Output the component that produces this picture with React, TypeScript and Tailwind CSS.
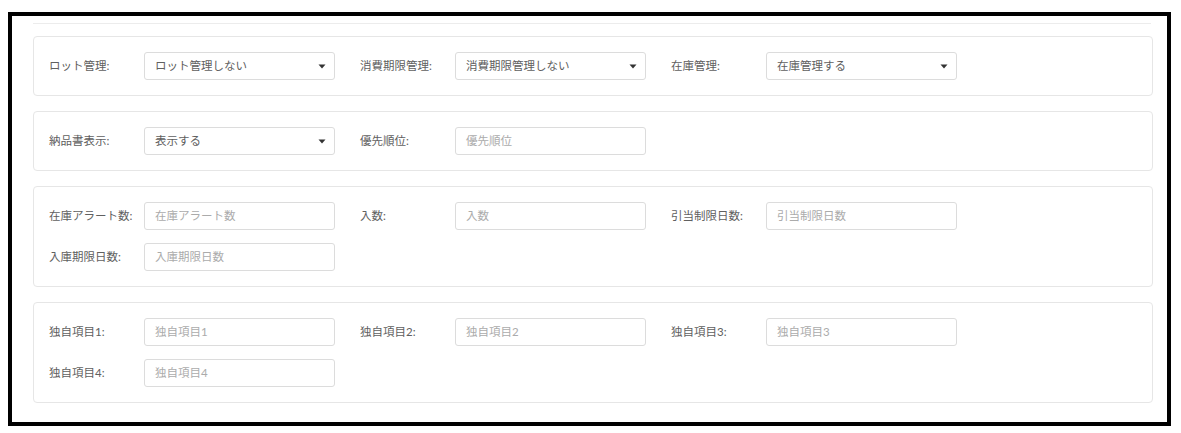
const font = { fontFamily: 'Lato, "Noto Sans CJK JP", sans-serif' };

type Field = { label: string; kind: 'select' | 'input'; value: string };

const cards: Field[][][] = [
  [
    [
      { label: 'ロット管理:', kind: 'select', value: 'ロット管理しない' },
      { label: '消費期限管理:', kind: 'select', value: '消費期限管理しない' },
      { label: '在庫管理:', kind: 'select', value: '在庫管理する' },
    ],
  ],
  [
    [
      { label: '納品書表示:', kind: 'select', value: '表示する' },
      { label: '優先順位:', kind: 'input', value: '優先順位' },
    ],
  ],
  [
    [
      { label: '在庫アラート数:', kind: 'input', value: '在庫アラート数' },
      { label: '入数:', kind: 'input', value: '入数' },
      { label: '引当制限日数:', kind: 'input', value: '引当制限日数' },
    ],
    [{ label: '入庫期限日数:', kind: 'input', value: '入庫期限日数' }],
  ],
  [
    [
      { label: '独自項目1:', kind: 'input', value: '独自項目1' },
      { label: '独自項目2:', kind: 'input', value: '独自項目2' },
      { label: '独自項目3:', kind: 'input', value: '独自項目3' },
    ],
    [{ label: '独自項目4:', kind: 'input', value: '独自項目4' }],
  ],
];

const FieldBox = ({ field }: { field: Field }) => (
  <div className="flex items-center w-[311px]">
    <span className="w-[95px] text-[11.5px] text-[#606060]">{field.label}</span>
    {field.kind === 'select' ? (
      <div className="flex items-center justify-between w-[191px] h-[28px] pl-[10px] pr-[8px] border border-[#dcdcdc] rounded-[3px] bg-white text-[11.5px] text-[#606060]">
        <span>{field.value}</span>
        <svg width="8" height="5" viewBox="0 0 8 5">
          <path d="M0.5 0.5 L7.5 0.5 L4 4.5 Z" fill="#333" />
        </svg>
      </div>
    ) : (
      <div className="flex items-center w-[191px] h-[28px] pl-[10px] border border-[#dcdcdc] rounded-[3px] bg-white text-[11.5px] text-[#ababab]">
        {field.value}
      </div>
    )}
  </div>
);

export default function App() {
  return (
    <div className="bg-white w-[1181px] h-[433px] pt-[12px] pl-[8px]" style={font}>
      <div className="w-[1163px] h-[414px] border-4 border-black pl-[21px] pr-[14px]">
        <div className="mt-[7px] h-px bg-[#ececec] mr-[2px]" />
        <div className="mt-[12px] flex flex-col gap-[15px]">
          {cards.map((rows, i) => (
            <div key={i} className="border border-[#e6e6e6] rounded-[4px] p-[15px] flex flex-col gap-[13px]">
              {rows.map((row, j) => (
                <div key={j} className="flex">
                  {row.map((f) => (
                    <FieldBox key={f.label} field={f} />
                  ))}
                </div>
              ))}
            </div>
          ))}
        </div>
      </div>
    </div>
  );
}
